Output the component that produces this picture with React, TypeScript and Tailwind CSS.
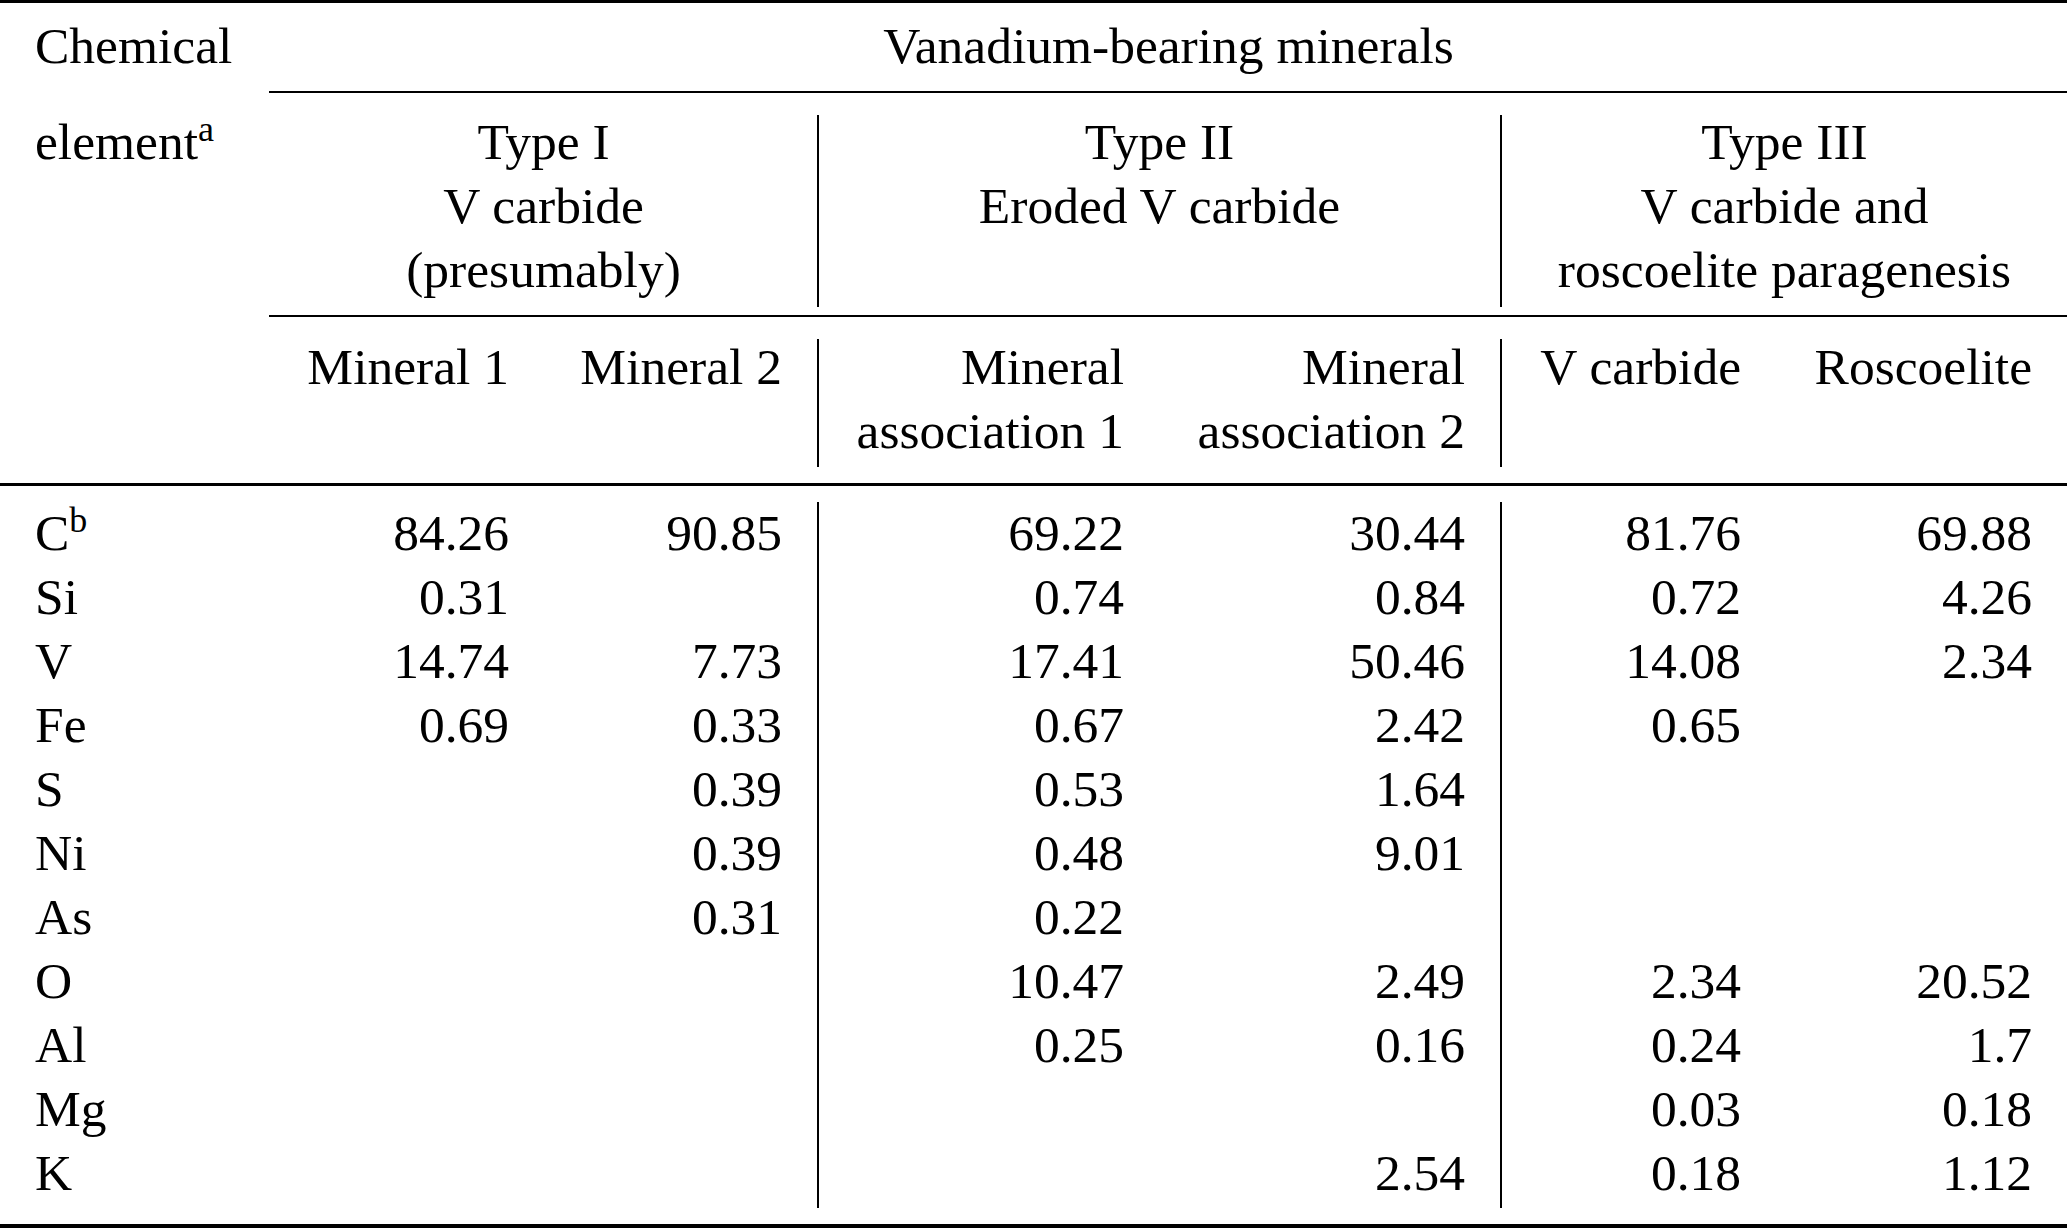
const COLS = "grid grid-cols-[270px_274px_273px_2px_340px_341px_2px_274px_291px]";

type Row = { el: string; sup?: string; values: string[] };

const rows: Row[] = [
  { el: "C", sup: "b", values: ["84.26", "90.85", "69.22", "30.44", "81.76", "69.88"] },
  { el: "Si", values: ["0.31", "", "0.74", "0.84", "0.72", "4.26"] },
  { el: "V", values: ["14.74", "7.73", "17.41", "50.46", "14.08", "2.34"] },
  { el: "Fe", values: ["0.69", "0.33", "0.67", "2.42", "0.65", ""] },
  { el: "S", values: ["", "0.39", "0.53", "1.64", "", ""] },
  { el: "Ni", values: ["", "0.39", "0.48", "9.01", "", ""] },
  { el: "As", values: ["", "0.31", "0.22", "", "", ""] },
  { el: "O", values: ["", "", "10.47", "2.49", "2.34", "20.52"] },
  { el: "Al", values: ["", "", "0.25", "0.16", "0.24", "1.7"] },
  { el: "Mg", values: ["", "", "", "", "0.03", "0.18"] },
  { el: "K", values: ["", "", "", "2.54", "0.18", "1.12"] },
];

const Sup = ({ children }: { children: string }) => (
  <sup className="text-[36px]">{children}</sup>
);

// one body column of right-aligned numbers
const DataColumn = ({ col }: { col: number }) => (
  <div className="px-[35px] pt-[15px] pb-[19px] text-right">
    {rows.map((r, i) => (
      <div key={i} className="h-16">
        {r.values[col]}
      </div>
    ))}
  </div>
);

const GroupHead = ({ lines }: { lines: string[] }) => (
  <div className="col-span-2 pt-[17px] pb-[13px] text-center">
    {lines.map((l) => (
      <div key={l} className="h-16">
        {l}
      </div>
    ))}
  </div>
);

const SubHead = ({ lines }: { lines: string[] }) => (
  <div className="px-[35px] pt-[18px] pb-[20px] text-right">
    {lines.map((l) => (
      <div key={l} className="h-16">
        {l}
      </div>
    ))}
  </div>
);

export default function App() {
  return (
    <div className="w-[2067px] h-[1228px] overflow-hidden bg-white text-black font-['Liberation_Serif','Times_New_Roman',serif] text-[51.5px] leading-[64px] whitespace-nowrap">
      {/* top rule */}
      <div className="h-[3px] bg-black" />

      {/* title row */}
      <div className={COLS}>
        <div className="pl-[35px] pt-[11px] pb-[13px]">Chemical</div>
        <div className="col-span-8 pt-[11px] pb-[13px] text-center">Vanadium-bearing minerals</div>
      </div>

      <div className="ml-[269px] h-[2px] bg-black" />

      {/* type headers */}
      <div className={COLS}>
        <div className="pl-[35px] pt-[17px] pb-[13px]">
          element<Sup>a</Sup>
        </div>
        <GroupHead lines={["Type I", "V carbide", "(presumably)"]} />
        <div className="mt-[22px] mb-[8px] h-[192px] bg-black" />
        <GroupHead lines={["Type II", "Eroded V carbide"]} />
        <div className="mt-[22px] mb-[8px] h-[192px] bg-black" />
        <GroupHead lines={["Type III", "V carbide and", "roscoelite paragenesis"]} />
      </div>

      <div className="ml-[269px] h-[2px] bg-black" />

      {/* sub headers */}
      <div className={COLS}>
        <div />
        <SubHead lines={["Mineral 1"]} />
        <SubHead lines={["Mineral 2"]} />
        <div className="mt-[22px] mb-[16px] h-[128px] bg-black" />
        <SubHead lines={["Mineral", "association 1"]} />
        <SubHead lines={["Mineral", "association 2"]} />
        <div className="mt-[22px] mb-[16px] h-[128px] bg-black" />
        <SubHead lines={["V carbide"]} />
        <SubHead lines={["Roscoelite"]} />
      </div>

      {/* mid rule */}
      <div className="h-[3px] bg-black" />

      {/* body */}
      <div className={COLS}>
        <div className="pl-[35px] pt-[15px] pb-[19px]">
          {rows.map((r) => (
            <div key={r.el} className="h-16">
              {r.el}
              {r.sup && <Sup>{r.sup}</Sup>}
            </div>
          ))}
        </div>
        <DataColumn col={0} />
        <DataColumn col={1} />
        <div className="mt-[16px] mb-[16px] h-[706px] bg-black" />
        <DataColumn col={2} />
        <DataColumn col={3} />
        <div className="mt-[16px] mb-[16px] h-[706px] bg-black" />
        <DataColumn col={4} />
        <DataColumn col={5} />
      </div>

      {/* bottom rule */}
      <div className="h-[4px] bg-black" />
    </div>
  );
}
